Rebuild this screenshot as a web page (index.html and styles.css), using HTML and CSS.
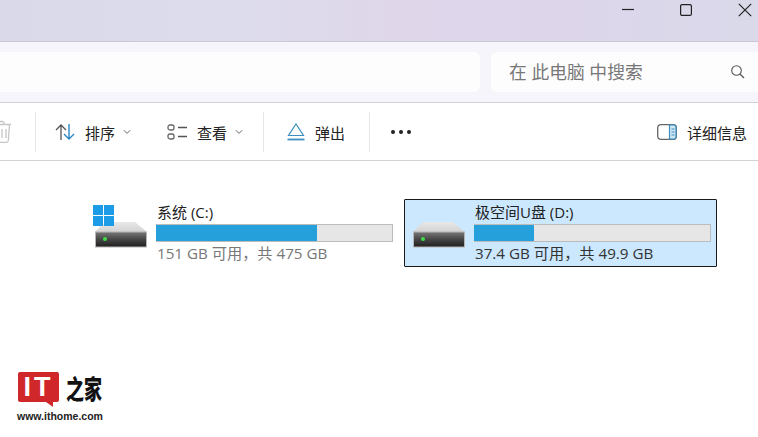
FILE: index.html
```html
<!DOCTYPE html>
<html lang="zh-CN">
<head>
    <meta charset="UTF-8">
    <meta name="viewport" content="width=device-width, initial-scale=1.0">
    <title>此电脑</title>
    <link rel="stylesheet" href="styles.css">
</head>
<body>
    <div class="window">
        <!-- title bar -->
        <div class="title-bar">
            <svg class="win-btn win-min" width="14" height="14" viewBox="0 0 14 14"><path d="M1 6.500h12" stroke="#222" stroke-width="1.200"/></svg>
            <svg class="win-btn win-max" width="14" height="14" viewBox="0 0 14 14"><rect x="1.600" y="1.600" width="10.800" height="10.800" rx="1.500" fill="none" stroke="#222" stroke-width="1.200"/></svg>
            <svg class="win-btn win-close" width="14" height="14" viewBox="0 0 14 14"><path d="M.8.8l12.400 12.400M13.200.8L.8 13.200" stroke="#222" stroke-width="1.200"/></svg>
        </div>

        <!-- address + search -->
        <div class="address-row">
            <div class="address-box"></div>
            <div class="search-box">
                <span class="search-text">在 此电脑 中搜索</span>
                <svg width="16" height="16" viewBox="0 0 16 16"><circle cx="6.500" cy="6.500" r="4.800" fill="none" stroke="#555" stroke-width="1.100"/><path d="M10 10l4 4" stroke="#555" stroke-width="1.200"/></svg>
            </div>
        </div>

        <!-- toolbar -->
        <div class="toolbar">
            <div class="tool tool-trash">
                <svg width="12" height="24" viewBox="0 0 12 24"><path d="M-8 4.500h19M9.500 4.500L8.300 20.500a2 2 0 0 1-2 1.800H-4M-2 4V3a1.500 1.500 0 0 1 1.500-1.500h3A1.500 1.500 0 0 1 4 3v1" fill="none" stroke="#c6c6c6" stroke-width="1.300"/><path d="M2 9v9M6 9v9" stroke="#c6c6c6" stroke-width="1.300"/></svg>
            </div>
            <div class="divider"></div>
            <div class="tool tool-sort">
                <svg width="20" height="18" viewBox="0 0 20 18"><path d="M6 17V2M1 7l5-5 5 5" fill="none" stroke="#555" stroke-width="1.300"/><path d="M14 1v15M9 11l5 5 5-5" fill="none" stroke="#2b86c5" stroke-width="1.400"/></svg>
                <span>排序</span>
                <svg class="chevron" width="8" height="6" viewBox="0 0 8 6"><path d="M.8 1.200L4 4.400l3.200-3.200" fill="none" stroke="#666" stroke-width="1"/></svg>
            </div>
            <div class="tool tool-view">
                <svg width="20" height="16" viewBox="0 0 20 16"><rect x="1" y="1" width="6" height="5" rx="2" fill="none" stroke="#666" stroke-width="1.300"/><rect x="1" y="10" width="6" height="5" rx="2" fill="none" stroke="#666" stroke-width="1.300"/><path d="M11 3.500h9M11 12.500h9" stroke="#555" stroke-width="1.300"/></svg>
                <span>查看</span>
                <svg class="chevron" width="8" height="6" viewBox="0 0 8 6"><path d="M.8 1.200L4 4.400l3.200-3.200" fill="none" stroke="#666" stroke-width="1"/></svg>
            </div>
            <div class="divider"></div>
            <div class="tool tool-eject">
                <svg width="18" height="18" viewBox="0 0 18 18"><path d="M9 1L16.500 12.500h-15z" fill="none" stroke="#3d8fbf" stroke-width="1.200"/><path d="M.500 16.500h17" stroke="#3d8fbf" stroke-width="1.800"/></svg>
                <span>弹出</span>
            </div>
            <div class="divider"></div>
            <div class="tool tool-more">
                <i></i><i></i><i></i>
            </div>
            <div class="tool tool-details">
                <svg width="20" height="16" viewBox="0 0 20 16"><rect x=".7" y=".7" width="18.600" height="14.600" rx="3" fill="none" stroke="#666" stroke-width="1.300"/><path d="M12.500 1h4a2.500 2.500 0 0 1 2.500 2.500v9a2.500 2.500 0 0 1-2.500 2.500h-4z" fill="#cfe6f5" stroke="#3d8fbf" stroke-width="1.200"/><path d="M14.500 5h3M14.500 8h3M14.500 11h3" stroke="#3d8fbf"/></svg>
                <span>详细信息</span>
            </div>
        </div>

        <!-- drives -->
        <div class="drives">
            <div class="drive">
                <div class="drive-icon">
                    <svg width="56" height="44" viewBox="0 0 56 44">
                        <use href="#disk"/>
                        <path d="M0 0h10v10H0zM11 0h10v10H11zM0 11h10v10H0zM11 11h10v10H11z" fill="#1c9ce6"/>
                    </svg>
                </div>
                <div class="drive-info">
                    <div class="drive-name">系统 (C:)</div>
                    <div class="usage"><div class="usage-fill" style="width: 68.200%"></div></div>
                    <div class="drive-free">151 GB 可用，共 475 GB</div>
                </div>
            </div>
            <div class="drive selected">
                <div class="drive-icon">
                    <svg width="56" height="44" viewBox="0 0 56 44"><use href="#disk"/></svg>
                </div>
                <div class="drive-info">
                    <div class="drive-name">极空间U盘 (D:)</div>
                    <div class="usage"><div class="usage-fill" style="width: 25.300%"></div></div>
                    <div class="drive-free">37.4 GB 可用，共 49.9 GB</div>
                </div>
            </div>
        </div>
    </div>

    <!-- shared drive drawing -->
    <svg class="defs" width="0" height="0">
        <defs>
            <linearGradient id="diskTop" x1="0" y1="0" x2="0" y2="1"><stop offset="0" stop-color="#e8e8e8"/><stop offset="1" stop-color="#d2d2d2"/></linearGradient>
            <linearGradient id="diskBody" x1="0" y1="0" x2="0" y2="1"><stop offset="0" stop-color="#777"/><stop offset=".5" stop-color="#454545"/><stop offset="1" stop-color="#1f1f1f"/></linearGradient>
            <symbol id="disk" viewBox="0 0 56 44" width="56" height="44">
                <path d="M12 17h30l12 10H2z" fill="url(#diskTop)"/>
                <rect x="2.500" y="27" width="51" height="15" fill="url(#diskBody)" stroke="#b5b5b5"/>
                <circle cx="12" cy="34" r="2" fill="#3fdc4a"/>
            </symbol>
        </defs>
    </svg>

    <!-- watermark -->
    <div class="watermark">
        <div class="wm-top">
            <div class="wm-it">IT</div>
            <div class="wm-home">之家</div>
        </div>
        <div class="wm-url">www.ithome.com</div>
    </div>
</body>
</html>
```

FILE: styles.css
```css
:root {
    --line: #d2d2d6;
    --ink: #222;
    --muted: #777;
    --blue: #26a0da;
}

html, body {
    margin: 0;
    padding: 0;
    height: 437px;
    overflow: hidden;
    background: white;
}

body {
    position: relative;
    font-family: "Open Sans", "Noto Sans CJK SC", sans-serif;
    color: var(--ink);
}

.window {
    display: flex;
    flex-direction: column;
}

/* title bar */
.title-bar {
    height: 41px;
    display: flex;
    align-items: flex-start;
    justify-content: flex-end;
    background: linear-gradient(90deg, #d9d9ea 0%, #dcdcec 30%, #dfd6ea 52%, #ddd6ea 75%, #d9d9ea 100%);
    border-bottom: 1px solid #c9c9d6;
}

.win-btn {
    margin-top: 3px;
}

.win-min {
    margin-right: 44px;
}

.win-max {
    margin-right: 45px;
}

.win-close {
    margin-right: 6px;
}

/* address row */
.address-row {
    box-sizing: border-box;
    height: 61px;
    padding: 10px 0;
    display: flex;
    gap: 11px;
    background: #f5f5fb;
    border-bottom: 1px solid var(--line);
}

.address-box {
    width: 480px;
    background: #fdfdfe;
    border-radius: 0 6px 6px 0;
}

.search-box {
    flex: 1;
    display: flex;
    align-items: center;
    justify-content: space-between;
    padding: 0 12px 0 18px;
    background: #fdfdfe;
    border-radius: 6px 0 0 6px;
}

.search-text {
    font-size: 17.800px;
    color: var(--muted);
    padding-bottom: 2px;
}

/* toolbar */
.toolbar {
    height: 57px;
    display: flex;
    align-items: center;
    border-bottom: 1px solid var(--line);
    font-size: 15px;
}

.tool {
    display: flex;
    align-items: center;
    gap: 10px;
}

.tool span {
    padding-top: 2px;
}

.divider {
    width: 1px;
    height: 40px;
    background: #e6e6e8;
}

.chevron {
    margin-left: -2px;
}

.tool-trash {
    width: 35px;
}

.tool-sort {
    margin-left: 19px;
}

.tool-view {
    margin-left: 36px;
    margin-right: 20px;
}

.tool-eject {
    margin-left: 23px;
    margin-right: 24px;
}

.tool-more {
    margin-left: 21px;
    gap: 4px;
}

.tool-more i {
    width: 4px;
    height: 4px;
    border-radius: 50%;
    background: #222;
}

.tool-details {
    margin-left: auto;
    margin-right: 11px;
}

/* drives */
.drives {
    display: flex;
    gap: 5px;
    padding: 38px 0 0 86px;
}

.drive {
    width: 313px;
    height: 68px;
    box-sizing: border-box;
    border: 1px solid transparent;
    display: flex;
    padding: 3px 5px 0 6px;
}

.drive.selected {
    background: #cce8ff;
    border-color: #1a1a1a;
    border-radius: 1px;
}

.drive-icon {
    width: 63px;
    flex-shrink: 0;
    margin-top: 2px;
}

.drive-info {
    flex: 1;
}

.drive-name {
    font-size: 15px;
    line-height: 19px;
    padding-left: 1px;
}

.usage {
    height: 16px;
    background: #e6e6e6;
    border: 1px solid #bcbcbc;
    border-left: 0;
    margin-top: 2px;
}

.usage-fill {
    height: 100%;
    background: var(--blue);
}

.drive-free {
    font-size: 15.200px;
    line-height: 20px;
    color: var(--muted);
    padding-left: 1px;
    margin-top: 1px;
}

.selected .drive-free {
    color: #333;
}

.defs {
    position: absolute;
}

/* watermark */
.watermark {
    position: absolute;
    left: 18px;
    top: 372px;
    width: 88px;
}

.wm-top {
    display: flex;
    align-items: flex-start;
    gap: 7px;
}

.wm-it {
    position: relative;
    width: 41px;
    height: 30px;
    background: #d0282a;
    border-radius: 2px;
    color: white;
    font-family: "Liberation Sans", sans-serif;
    font-weight: 700;
    font-size: 27px;
    line-height: 30px;
    text-align: center;
    letter-spacing: 3px;
}

.wm-it::after {
    content: "";
    position: absolute;
    right: 6px;
    bottom: -5px;
    border-top: 5px solid #d0282a;
    border-left: 7px solid transparent;
}

.wm-home {
    font-family: "Noto Sans CJK SC", sans-serif;
    font-weight: 900;
    font-size: 18px;
    line-height: 30px;
    color: #111;
    white-space: nowrap;
    transform: scaleY(1.45);
}

.wm-url {
    font-family: "Liberation Sans", sans-serif;
    font-weight: 700;
    font-size: 10.500px;
    line-height: 12px;
    margin: 8px 0 0 -1px;
    color: #222;
    white-space: nowrap;
}
```
